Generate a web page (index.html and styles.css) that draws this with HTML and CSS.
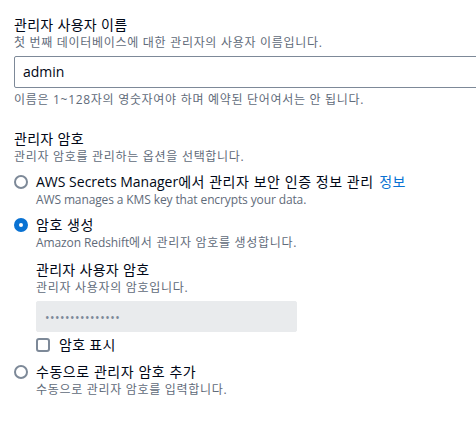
FILE: index.html
```html
<!DOCTYPE html>
<html lang="ko">
<head>
<meta charset="utf-8">
<link rel="stylesheet" href="styles.css">
</head>
<body>
<div class="form">
  <div class="field">
    <div class="label">관리자 사용자 이름</div>
    <div class="desc">첫 번째 데이터베이스에 대한 관리자의 사용자 이름입니다.</div>
    <div class="input">admin</div>
    <div class="hint">이름은 1~128자의 영숫자여야 하며 예약된 단어여서는 안 됩니다.</div>
  </div>
  <div class="field field-pw">
    <div class="label">관리자 암호</div>
    <div class="desc">관리자 암호를 관리하는 옵션을 선택합니다.</div>
    <div class="radios">
      <div class="radio-item">
        <span class="radio"></span>
        <div class="radio-body">
          <div class="radio-label">AWS Secrets Manager<span class="ko">에서 관리자 보안 인증 정보 관리</span> <a class="info">정보</a></div>
          <div class="desc latin">AWS manages a KMS key that encrypts your data.</div>
        </div>
      </div>
      <div class="radio-item">
        <span class="radio checked"></span>
        <div class="radio-body">
          <div class="radio-label"><span class="ko">암호 생성</span></div>
          <div class="desc mixed">Amazon Redshift<span class="ko">에서 관리자 암호를 생성합니다.</span></div>
          <div class="nested">
            <div class="label">관리자 사용자 암호</div>
            <div class="desc">관리자 사용자의 암호입니다.</div>
            <div class="input disabled"><span class="dots">•••••••••••••••</span></div>
            <div class="check-row">
              <span class="checkbox"></span>
              <span class="check-label">암호 표시</span>
            </div>
          </div>
        </div>
      </div>
      <div class="radio-item">
        <span class="radio"></span>
        <div class="radio-body">
          <div class="radio-label"><span class="ko">수동으로 관리자 암호 추가</span></div>
          <div class="desc">수동으로 관리자 암호를 입력합니다.</div>
        </div>
      </div>
    </div>
  </div>
</div>
</body>
</html>
```
FILE: styles.css
```css
html, body {
  margin: 0;
  padding: 0;
  background: #ffffff;
}
body {
  font-family: "Open Sans", "Noto Sans CJK KR", sans-serif;
  color: #000716;
  overflow: hidden;
}
.form {
  padding: 15px 0 0 14px;
}
.label, .radio-label, .check-label {
  font-size: 14px;
  line-height: 20px;
  color: #000716;
  white-space: nowrap;
  letter-spacing: 0.3px;
}
.radio-label {
  letter-spacing: 0;
}
.radio-label .ko {
  letter-spacing: 0.55px;
}
.desc, .hint {
  font-size: 12px;
  line-height: 16px;
  color: #5f6b7a;
  white-space: nowrap;
  letter-spacing: 0.7px;
}
.desc.latin {
  letter-spacing: -0.12px;
}
.desc.mixed {
  letter-spacing: -0.1px;
}
.desc.mixed .ko {
  letter-spacing: 0.7px;
}
.input {
  margin-top: 5px;
  height: 32px;
  box-sizing: border-box;
  border: 1px solid #7d8998;
  border-radius: 2px;
  width: 480px;
  padding: 0 8px;
  font-size: 14px;
  line-height: 30px;
  color: #000716;
  letter-spacing: 0;
}
.hint {
  margin-top: 4px;
}
.field-pw {
  margin-top: 21px;
}
.radios {
  display: flex;
  flex-direction: column;
  gap: 7px;
  margin-top: 7px;
}
.radio-item {
  display: flex;
  gap: 8px;
  align-items: flex-start;
}
.radio {
  flex: none;
  width: 14px;
  height: 14px;
  box-sizing: border-box;
  border: 2px solid #7d8998;
  border-radius: 50%;
  margin-top: 3px;
  background: #fff;
}
.radio.checked {
  border: 5px solid #0972d3;
}
.info {
  color: #0972d3;
  font-size: 14px;
  margin-left: 2px;
  letter-spacing: 0.3px;
}
.nested {
  margin-top: 9px;
}
.input.disabled {
  width: 261px;
  height: 31px;
  background: #e9ebed;
  border-color: #e9ebed;
  line-height: 29px;
}
.dots {
  font-size: 12px;
  color: #7d8998;
  letter-spacing: 0.5px;
}
.check-row {
  display: flex;
  align-items: center;
  gap: 9px;
  height: 20px;
  margin-top: 3px;
}
.checkbox {
  width: 14px;
  height: 14px;
  box-sizing: border-box;
  border: 2px solid #7d8998;
  border-radius: 3px;
}
```
